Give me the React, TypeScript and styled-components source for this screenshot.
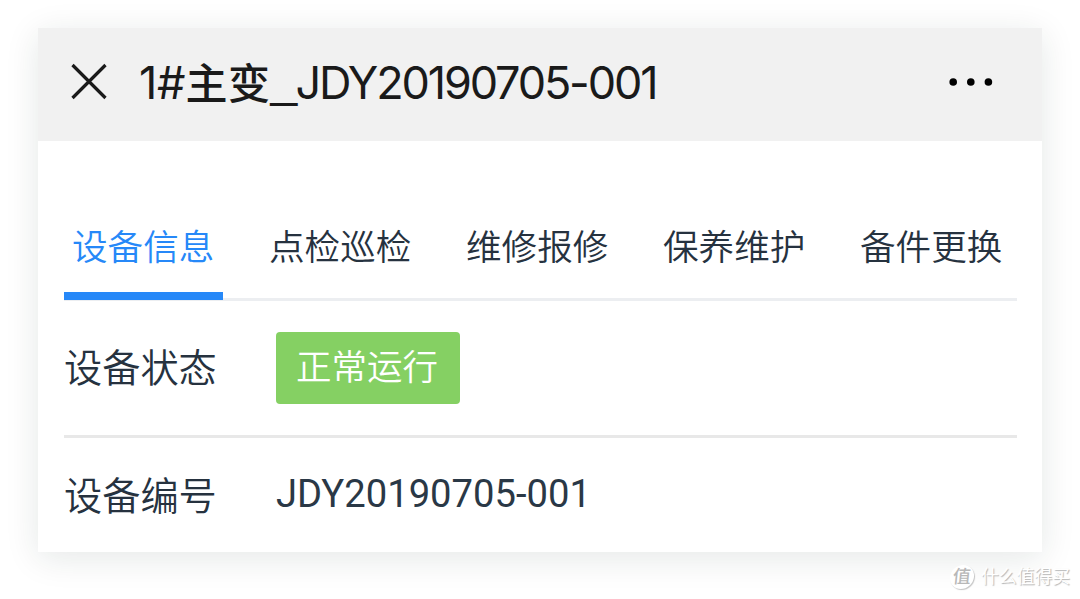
import styled, { createGlobalStyle } from 'styled-components';

const tabs = ['设备信息', '点检巡检', '维修报修', '保养维护', '备件更换'];

const App = () => {
  return (
    <>
      <GlobalStyle />
      <Page>
        <Card>
          <Header>
            <CloseIcon viewBox="0 0 38 38">
              <path d="M2.5 2L35.5 35M35.5 2L2.5 35" />
            </CloseIcon>
            <Title>
              <TitleNumber>1#</TitleNumber>
              <TitleName>主变</TitleName>
              <TitleUnderscore>_</TitleUnderscore>JDY20190705-001
            </Title>
            <MoreIcon viewBox="0 0 46 8">
              <circle cx="5.2" cy="4" r="3.8" />
              <circle cx="22.8" cy="4" r="3.8" />
              <circle cx="40.4" cy="4" r="3.8" />
            </MoreIcon>
          </Header>
          <Body>
            <TabList>
              {tabs.map((tab, index) => (
                <Tab key={tab} $active={index === 0}>
                  {tab}
                </Tab>
              ))}
            </TabList>
            <Row $height={137}>
              <Label>设备状态</Label>
              <Status>正常运行</Status>
            </Row>
            <Row $height={116}>
              <Label>设备编号</Label>
              <Value>JDY20190705-001</Value>
            </Row>
          </Body>
        </Card>
        <Watermark>
          <WatermarkLogo>值</WatermarkLogo>
          <WatermarkText>什么值得买</WatermarkText>
        </Watermark>
      </Page>
    </>
  );
};

const GlobalStyle = createGlobalStyle`
  * {
    box-sizing: border-box;
  }

  body {
    margin: 0;
    background-color: #ffffff;
    font-family: Roboto, 'Noto Sans CJK SC', sans-serif;
  }
`;

const Page = styled.div`
  position: relative;
  width: 1080px;
  height: 599px;
  padding: 28px 38px 0;
  overflow: hidden;
`;

const Card = styled.div`
  width: 1004px;
  height: 524px;
  background-color: #ffffff;
  box-shadow: 0 6px 32px rgba(20, 50, 40, 0.11);
`;

const Header = styled.header`
  height: 113px;
  padding: 0 48px 6px 32px;
  display: flex;
  align-items: center;
  background-color: #f1f1f1;
`;

const CloseIcon = styled.svg`
  width: 38px;
  height: 38px;
  stroke: #1a1a1a;
  stroke-width: 3.2;
`;

const Title = styled.h1`
  margin: 0 auto 0 31px;
  padding-top: 4px;
  color: #1a1a1a;
  font-family: Inter, 'Noto Sans CJK SC', sans-serif;
  font-weight: 400;
  font-size: 45px;
  line-height: 60px;
  letter-spacing: -2.15px;
  white-space: nowrap;
`;

const TitleNumber = styled.span`
  letter-spacing: -0.2px;
`;

const TitleName = styled.span`
  font-weight: 500;
  font-size: 42px;
  letter-spacing: 0.6px;
`;

const TitleUnderscore = styled.span`
  font-family: 'Liberation Sans', sans-serif;
  font-size: 48px;
  line-height: 1;
  letter-spacing: -1.8px;
  vertical-align: 3px;
`;

const MoreIcon = styled.svg`
  width: 46px;
  height: 8px;
  fill: #000000;
`;

const Body = styled.main`
  padding: 55px 25px 0 26px;
`;

const TabList = styled.nav`
  height: 105px;
  display: flex;
  gap: 38px;
  border-bottom: 3px solid #eceef1;
`;

const Tab = styled.div<{ $active: boolean }>`
  width: 159px;
  height: 104px;
  padding: 26px 0 0 8px;
  color: ${({ $active }) => ($active ? '#2688f8' : '#26323f')};
  border-bottom: 8px solid ${({ $active }) => ($active ? '#2688f8' : 'transparent')};
  font-weight: 350;
  font-size: 35.6px;
  line-height: 52px;
  white-space: nowrap;
`;

const Row = styled.div<{ $height: number }>`
  height: ${({ $height }) => $height}px;
  display: flex;
  align-items: center;
  border-bottom: 3px solid #e8e8e8;

  &:last-child {
    border-bottom: 0;
  }
`;

const Label = styled.div`
  width: 212px;
  padding-top: 2px;
  color: #26323f;
  font-weight: 350;
  font-size: 38.2px;
  line-height: 56px;
`;

const Status = styled.div`
  width: 184px;
  height: 72px;
  padding-right: 2px;
  border-radius: 4px;
  background-color: #85d063;
  color: #ffffff;
  font-weight: 350;
  font-size: 35.5px;
  line-height: 72px;
  text-align: center;
`;

const Value = styled.div`
  padding-bottom: 4px;
  color: #2a3846;
  font-size: 38.2px;
  line-height: 56px;
`;

const Watermark = styled.div`
  position: absolute;
  right: 10px;
  bottom: 9px;
  display: flex;
  align-items: center;
  gap: 7px;
`;

const WatermarkLogo = styled.div`
  width: 24px;
  height: 24px;
  border-radius: 50%;
  background-color: #ffffff;
  box-shadow: 1px 1px 1px #c4c4c4;
  color: #b8b8b8;
  font-weight: 500;
  font-size: 18px;
  line-height: 23px;
  text-align: center;
  transform: skewX(-6deg);
`;

const WatermarkText = styled.div`
  color: #ffffff;
  font-size: 17.8px;
  line-height: 26px;
  text-shadow: 1px 1px 1px #b4b4b4;
`;

export default App;
